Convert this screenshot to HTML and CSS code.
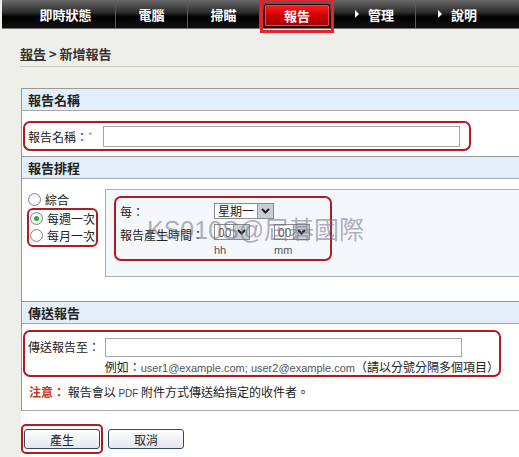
FILE: index.html
```html
<!DOCTYPE html>
<html lang="zh-Hant">
<head>
    <meta charset="UTF-8">
    <title>新增報告</title>
    <link rel="stylesheet" href="styles.css">
</head>
<body>
    <div class="nav">
        <div class="item w1">即時狀態</div>
        <div class="item w2">電腦</div>
        <div class="item w2">掃瞄</div>
        <div class="item w3"><span class="on">報告</span><span class="mark"></span></div>
        <div class="item w4"><span class="tri"></span>管理</div>
        <div class="item w5"><span class="tri"></span>說明</div>
    </div>

    <div class="crumb"><u>報告</u> &gt; 新增報告</div>

    <div class="main">
        <div class="form">
            <div class="head">報告名稱</div>
            <div class="row r1">
                <div class="hl hl1">
                    <span class="lab">報告名稱：<b class="star">*</b></span>
                    <span class="inp inp1"></span>
                </div>
            </div>

            <div class="head">報告排程</div>
            <div class="row r2">
                <div class="radios">
                    <div class="opt"><span class="rad"></span>綜合</div>
                    <div class="hl hl2">
                        <div class="opt"><span class="rad checked"></span>每週一次</div>
                        <div class="opt"><span class="rad"></span>每月一次</div>
                    </div>
                </div>
                <div class="sub">
                    <div class="hl hl3">
                        <div class="grid">
                            <span>每：</span>
                            <span class="sel w-day">星期一<i class="arr"><svg width="9" height="6" viewBox="0 0 9 6"><path d="M1 1 L4.5 4.5 L8 1" stroke="#222" stroke-width="2" fill="none"/></svg></i></span>
                            <span class="t2">報告產生時間：</span>
                            <div class="times">
                                <div class="tcol">
                                    <span class="sel w-t">00<i class="arr"><svg width="9" height="6" viewBox="0 0 9 6"><path d="M1 1 L4.5 4.5 L8 1" stroke="#222" stroke-width="2" fill="none"/></svg></i></span>
                                    <span class="unit">hh</span>
                                </div>
                                <div class="tcol">
                                    <span class="sel w-t">00<i class="arr"><svg width="9" height="6" viewBox="0 0 9 6"><path d="M1 1 L4.5 4.5 L8 1" stroke="#222" stroke-width="2" fill="none"/></svg></i></span>
                                    <span class="unit">mm</span>
                                </div>
                            </div>
                        </div>
                    </div>
                    <div class="wm">KS010S@屆碁國際</div>
                </div>
            </div>

            <div class="head">傳送報告</div>
            <div class="row r3">
                <div class="hl hl4">
                    <div class="line">
                        <span class="lab2">傳送報告至：</span>
                        <div>
                            <span class="inp inp2"></span>
                            <div class="eg">例如：<span class="mail">user1@example.com; user2@example.com</span>（請以分號分隔多個項目）</div>
                        </div>
                    </div>
                </div>
                <div class="note"><b>注意：</b> 報告會以 <span class="pdf">PDF</span> 附件方式傳送給指定的收件者。</div>
            </div>
        </div>

        <div class="btns">
            <span class="hl hl5"><span class="btn">產生</span></span>
            <span class="btn">取消</span>
        </div>
    </div>
</body>
</html>
```

FILE: styles.css
```css
body {
    margin: 0;
    background-color: #efefea;
    font-family: "Noto Sans CJK TC", "Liberation Sans", sans-serif;
    font-size: 12px;
    color: #222;
    overflow: hidden;
    width: 519px;
    height: 457px;
    white-space: nowrap;
}

.nav {
    display: flex;
    height: 28px;
    margin-left: 2px;
    background: linear-gradient(#6a6a6a, #2b2b2b 45%, #000 60%, #111);
    border-bottom: 1px solid #777;
}

.item {
    position: relative;
    display: flex;
    align-items: center;
    justify-content: center;
    color: #fff;
    font-weight: bold;
    font-size: 13px;
    border-right: 1px solid #5a5a5a;
    box-sizing: border-box;
}

.w1 { width: 114px; padding-left: 14px; }
.w2 { width: 72px; }
.w3 { width: 74px; border-right: none; }
.w4 { width: 82px; }
.w5 { width: 102px; border-right: none; justify-content: flex-start; padding-left: 22px; }

.on {
    display: flex;
    align-items: center;
    justify-content: center;
    width: 64px;
    height: 21px;
    margin-top: 2px;
    border: 1px solid #2a0000;
    border-radius: 2px;
    background: linear-gradient(#f22, #c00 50%, #a00);
    box-shadow: inset 0 0 0 1px #e44;
}

.mark {
    position: absolute;
    left: 0;
    top: -1px;
    width: 74px;
    height: 34px;
    border: 3px solid #e8232a;
    box-sizing: border-box;
}

.tri {
    width: 0;
    height: 0;
    border-left: 4px solid #fff;
    border-top: 4px solid transparent;
    border-bottom: 4px solid transparent;
    margin-right: 9px;
}

.crumb {
    margin: 0 0 0 20px;
    padding: 16px 0 3px 0;
    font-weight: bold;
    font-size: 13px;
    color: #333;
    border-bottom: 1px solid #cfcfc8;
    line-height: 18px;
}

.main {
    margin: 21px 0 0 21px;
    background: #fff;
    height: 369px;
}

.form {
    width: 540px;
    border-left: 1px solid #999;
    border-bottom: 1px solid #a8a8a8;
}

.head {
    height: 21px;
    line-height: 21px;
    padding-left: 6px;
    background-color: #e4eefa;
    border-top: 1px solid #999;
    border-bottom: 1px solid #a8a8a8;
    font-weight: bold;
    font-size: 13px;
}

.row {
    background: #fff;
}

.hl {
    border: 2px solid #b01c22;
    border-radius: 7px;
    box-sizing: border-box;
}

.r1 {
    height: 45px;
    padding: 10px 0 0 1px;
    box-sizing: border-box;
}

.hl1 {
    display: flex;
    align-items: center;
    width: 448px;
    height: 30px;
    padding-left: 3px;
}

.lab {
    width: 75px;
}

.star {
    color: #f08a24;
    font-weight: normal;
    font-size: 10px;
    vertical-align: top;
}

.inp {
    display: block;
    background: #fff;
    border: 1px solid #a5a5a5;
    box-sizing: border-box;
}

.inp1 {
    width: 357px;
    height: 21px;
}

.r2 {
    display: flex;
    height: 122px;
    padding-top: 10px;
    box-sizing: border-box;
}

.radios {
    width: 83px;
    padding: 2px 0 0 6px;
    box-sizing: border-box;
}

.opt {
    display: flex;
    align-items: center;
    height: 17px;
    line-height: 17px;
}

.hl2 {
    width: 71px;
    margin-left: -1px;
    padding: 0 0 1px 1px;
    border-radius: 6px;
}

.rad {
    width: 11px;
    height: 11px;
    border: 1px solid #7b8a99;
    border-radius: 50%;
    background: radial-gradient(#fff 40%, #dde2e8);
    margin-right: 4px;
    position: relative;
    flex-shrink: 0;
}

.rad.checked::after {
    content: "";
    position: absolute;
    left: 3px;
    top: 3px;
    width: 5px;
    height: 5px;
    border-radius: 50%;
    background: #3aa53a;
}

.sub {
    position: relative;
    flex: 1;
    height: 88px;
    background: #f4f8fd;
    border: 1px solid #a7b0ba;
    padding: 6px 0 0 8px;
    box-sizing: border-box;
}

.hl3 {
    width: 218px;
    height: 65px;
    padding: 5px 0 0 4px;
}

.grid {
    display: grid;
    grid-template-columns: 94px auto;
    row-gap: 4px;
    align-items: start;
}

.t2 {
    margin-top: 2px;
}

.sel {
    display: inline-flex;
    align-items: center;
    height: 16px;
    background: #fff;
    border: 1px solid #8a8a8a;
    padding-left: 3px;
    box-sizing: border-box;
    line-height: 14px;
    justify-content: space-between;
}

.w-day { width: 60px; }
.w-t { width: 36px; color: #666; }

.arr {
    display: flex;
    align-items: center;
    justify-content: center;
    width: 15px;
    height: 14px;
    background: #c9ced6;
    border-left: 1px solid #999;
}

.times {
    display: flex;
    gap: 24px;
}

.tcol {
    display: flex;
    flex-direction: column;
}

.unit {
    font-family: "Liberation Sans", sans-serif;
    font-size: 11px;
    color: #555;
    margin-top: 4px;
}

.wm {
    position: absolute;
    left: 41px;
    top: 20px;
    font-size: 25px;
    color: rgba(110, 110, 130, 0.55);
    font-family: "Liberation Sans", "Noto Sans CJK TC", sans-serif;
    white-space: nowrap;
}

.r3 {
    height: 86px;
    padding: 6px 0 0 1px;
    box-sizing: border-box;
}

.hl4 {
    width: 478px;
    height: 47px;
    padding: 6px 0 0 3px;
}

.line {
    display: flex;
}

.lab2 {
    width: 83px;
    line-height: 18px;
}

.inp2 {
    width: 357px;
    height: 19px;
}

.eg {
    margin-top: 1px;
    line-height: 17px;
}

.mail {
    font-family: "Liberation Sans", sans-serif;
    font-size: 11px;
    color: #555;
}

.note {
    margin: 6px 0 0 6px;
}

.note b {
    color: #c8361a;
}

.pdf {
    font-family: "Liberation Sans", sans-serif;
    font-size: 10px;
    color: #444;
}

.btns {
    display: flex;
    align-items: center;
    gap: 5px;
    padding: 13px 0 0 0;
}

.hl5 {
    display: inline-flex;
    padding: 3px 1px;
    border-radius: 5px;
}

.btn {
    display: inline-flex;
    align-items: center;
    justify-content: center;
    width: 76px;
    height: 20px;
    border: 1px solid #34495c;
    border-radius: 3px;
    background: linear-gradient(#fff, #e4e6ef);
    box-sizing: border-box;
}
```
